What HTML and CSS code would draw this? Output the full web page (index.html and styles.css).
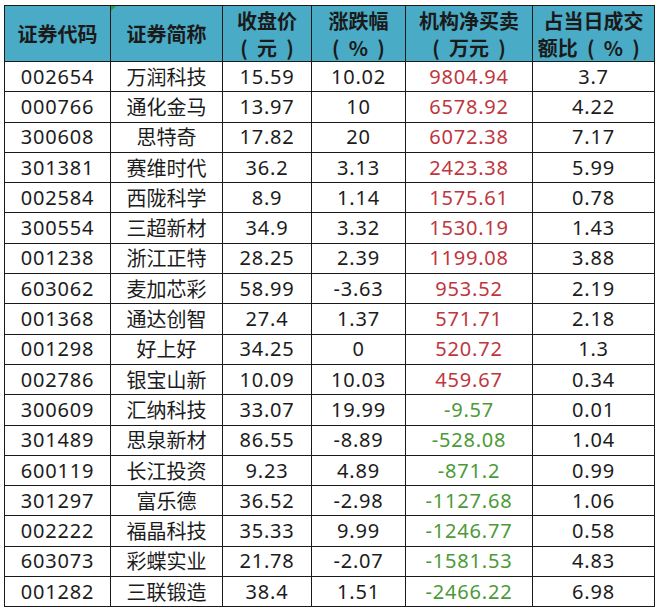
FILE: index.html
```html
<!DOCTYPE html>
<html lang="zh">
<head>
<meta charset="utf-8">
<link rel="stylesheet" href="styles.css">
</head>
<body>
<table class="grid">
  <colgroup>
    <col class="c1"><col class="c2"><col class="c3"><col class="c4"><col class="c5"><col class="c6">
  </colgroup>
  <thead>
    <tr>
      <th>证券代码</th>
      <th class="note">证券简称</th>
      <th>收盘价<br><span class="p">(</span>元<span class="p">)</span></th>
      <th>涨跌幅<br><span class="p">(</span>%<span class="p">)</span></th>
      <th>机构净买卖<br><span class="p">(</span>万元<span class="p">)</span></th>
      <th>占当日成交<br>额比<span class="p">(</span>%<span class="p">)</span></th>
    </tr>
  </thead>
  <tbody>
    <tr><td>002654</td><td>万润科技</td><td>15.59</td><td>10.02</td><td class="up">9804.94</td><td>3.7</td></tr>
    <tr><td>000766</td><td>通化金马</td><td>13.97</td><td>10</td><td class="up">6578.92</td><td>4.22</td></tr>
    <tr><td>300608</td><td>思特奇</td><td>17.82</td><td>20</td><td class="up">6072.38</td><td>7.17</td></tr>
    <tr><td>301381</td><td>赛维时代</td><td>36.2</td><td>3.13</td><td class="up">2423.38</td><td>5.99</td></tr>
    <tr><td>002584</td><td>西陇科学</td><td>8.9</td><td>1.14</td><td class="up">1575.61</td><td>0.78</td></tr>
    <tr><td>300554</td><td>三超新材</td><td>34.9</td><td>3.32</td><td class="up">1530.19</td><td>1.43</td></tr>
    <tr><td>001238</td><td>浙江正特</td><td>28.25</td><td>2.39</td><td class="up">1199.08</td><td>3.88</td></tr>
    <tr><td>603062</td><td>麦加芯彩</td><td>58.99</td><td>-3.63</td><td class="up">953.52</td><td>2.19</td></tr>
    <tr><td>001368</td><td>通达创智</td><td>27.4</td><td>1.37</td><td class="up">571.71</td><td>2.18</td></tr>
    <tr><td>001298</td><td>好上好</td><td>34.25</td><td>0</td><td class="up">520.72</td><td>1.3</td></tr>
    <tr><td>002786</td><td>银宝山新</td><td>10.09</td><td>10.03</td><td class="up">459.67</td><td>0.34</td></tr>
    <tr><td>300609</td><td>汇纳科技</td><td>33.07</td><td>19.99</td><td class="down">-9.57</td><td>0.01</td></tr>
    <tr><td>301489</td><td>思泉新材</td><td>86.55</td><td>-8.89</td><td class="down">-528.08</td><td>1.04</td></tr>
    <tr><td>600119</td><td>长江投资</td><td>9.23</td><td>4.89</td><td class="down">-871.2</td><td>0.99</td></tr>
    <tr><td>301297</td><td>富乐德</td><td>36.52</td><td>-2.98</td><td class="down">-1127.68</td><td>1.06</td></tr>
    <tr><td>002222</td><td>福晶科技</td><td>35.33</td><td>9.99</td><td class="down">-1246.77</td><td>0.58</td></tr>
    <tr><td>603073</td><td>彩蝶实业</td><td>21.78</td><td>-2.07</td><td class="down">-1581.53</td><td>4.83</td></tr>
    <tr><td>001282</td><td>三联锻造</td><td>38.4</td><td>1.51</td><td class="down">-2466.22</td><td>6.98</td></tr>
  </tbody>
</table>
</body>
</html>
```

FILE: styles.css
```css
html, body {
  margin: 0;
  padding: 0;
  background: #ffffff;
}

body {
  padding: 5px 0 0 4px;
  font-family: "Noto Sans", "Noto Sans CJK SC", sans-serif;
  color: #1c1c1c;
}

.grid {
  border-collapse: collapse;
  table-layout: fixed;
  width: 651px;
  border: 1px solid #1a1a1a;
}

.c1 { width: 106px; }
.c2 { width: 112px; }
.c3 { width: 89px; }
.c4 { width: 94px; }
.c5 { width: 127px; }
.c6 { width: 122px; }

.grid th,
.grid td {
  border: 1px solid #1a1a1a;
  padding: 0;
  text-align: center;
  vertical-align: middle;
  overflow: hidden;
  white-space: nowrap;
}

.grid th {
  height: 55px;
  background: #4aabc6;
  font-family: "Noto Sans CJK SC", sans-serif;
  font-weight: 700;
  font-size: 20px;
  line-height: 27px;
  color: #1a1a1a;
}

.grid th .p {
  display: inline-block;
  width: 26px;
  text-align: center;
}

.grid th.note {
  position: relative;
}

.grid th.note::before {
  content: "";
  position: absolute;
  left: 0;
  top: 0;
  border-top: 5px solid #2e9a3c;
  border-right: 5px solid transparent;
}

.grid td {
  height: 29.3px;
  font-size: 20px;
  line-height: 24px;
  letter-spacing: 0.8px;
}

.grid td:nth-child(2) {
  font-family: "Noto Sans CJK SC", sans-serif;
  letter-spacing: 0;
}

.grid td.up {
  color: #c0363e;
}

.grid td.down {
  color: #4b9a37;
}
```
